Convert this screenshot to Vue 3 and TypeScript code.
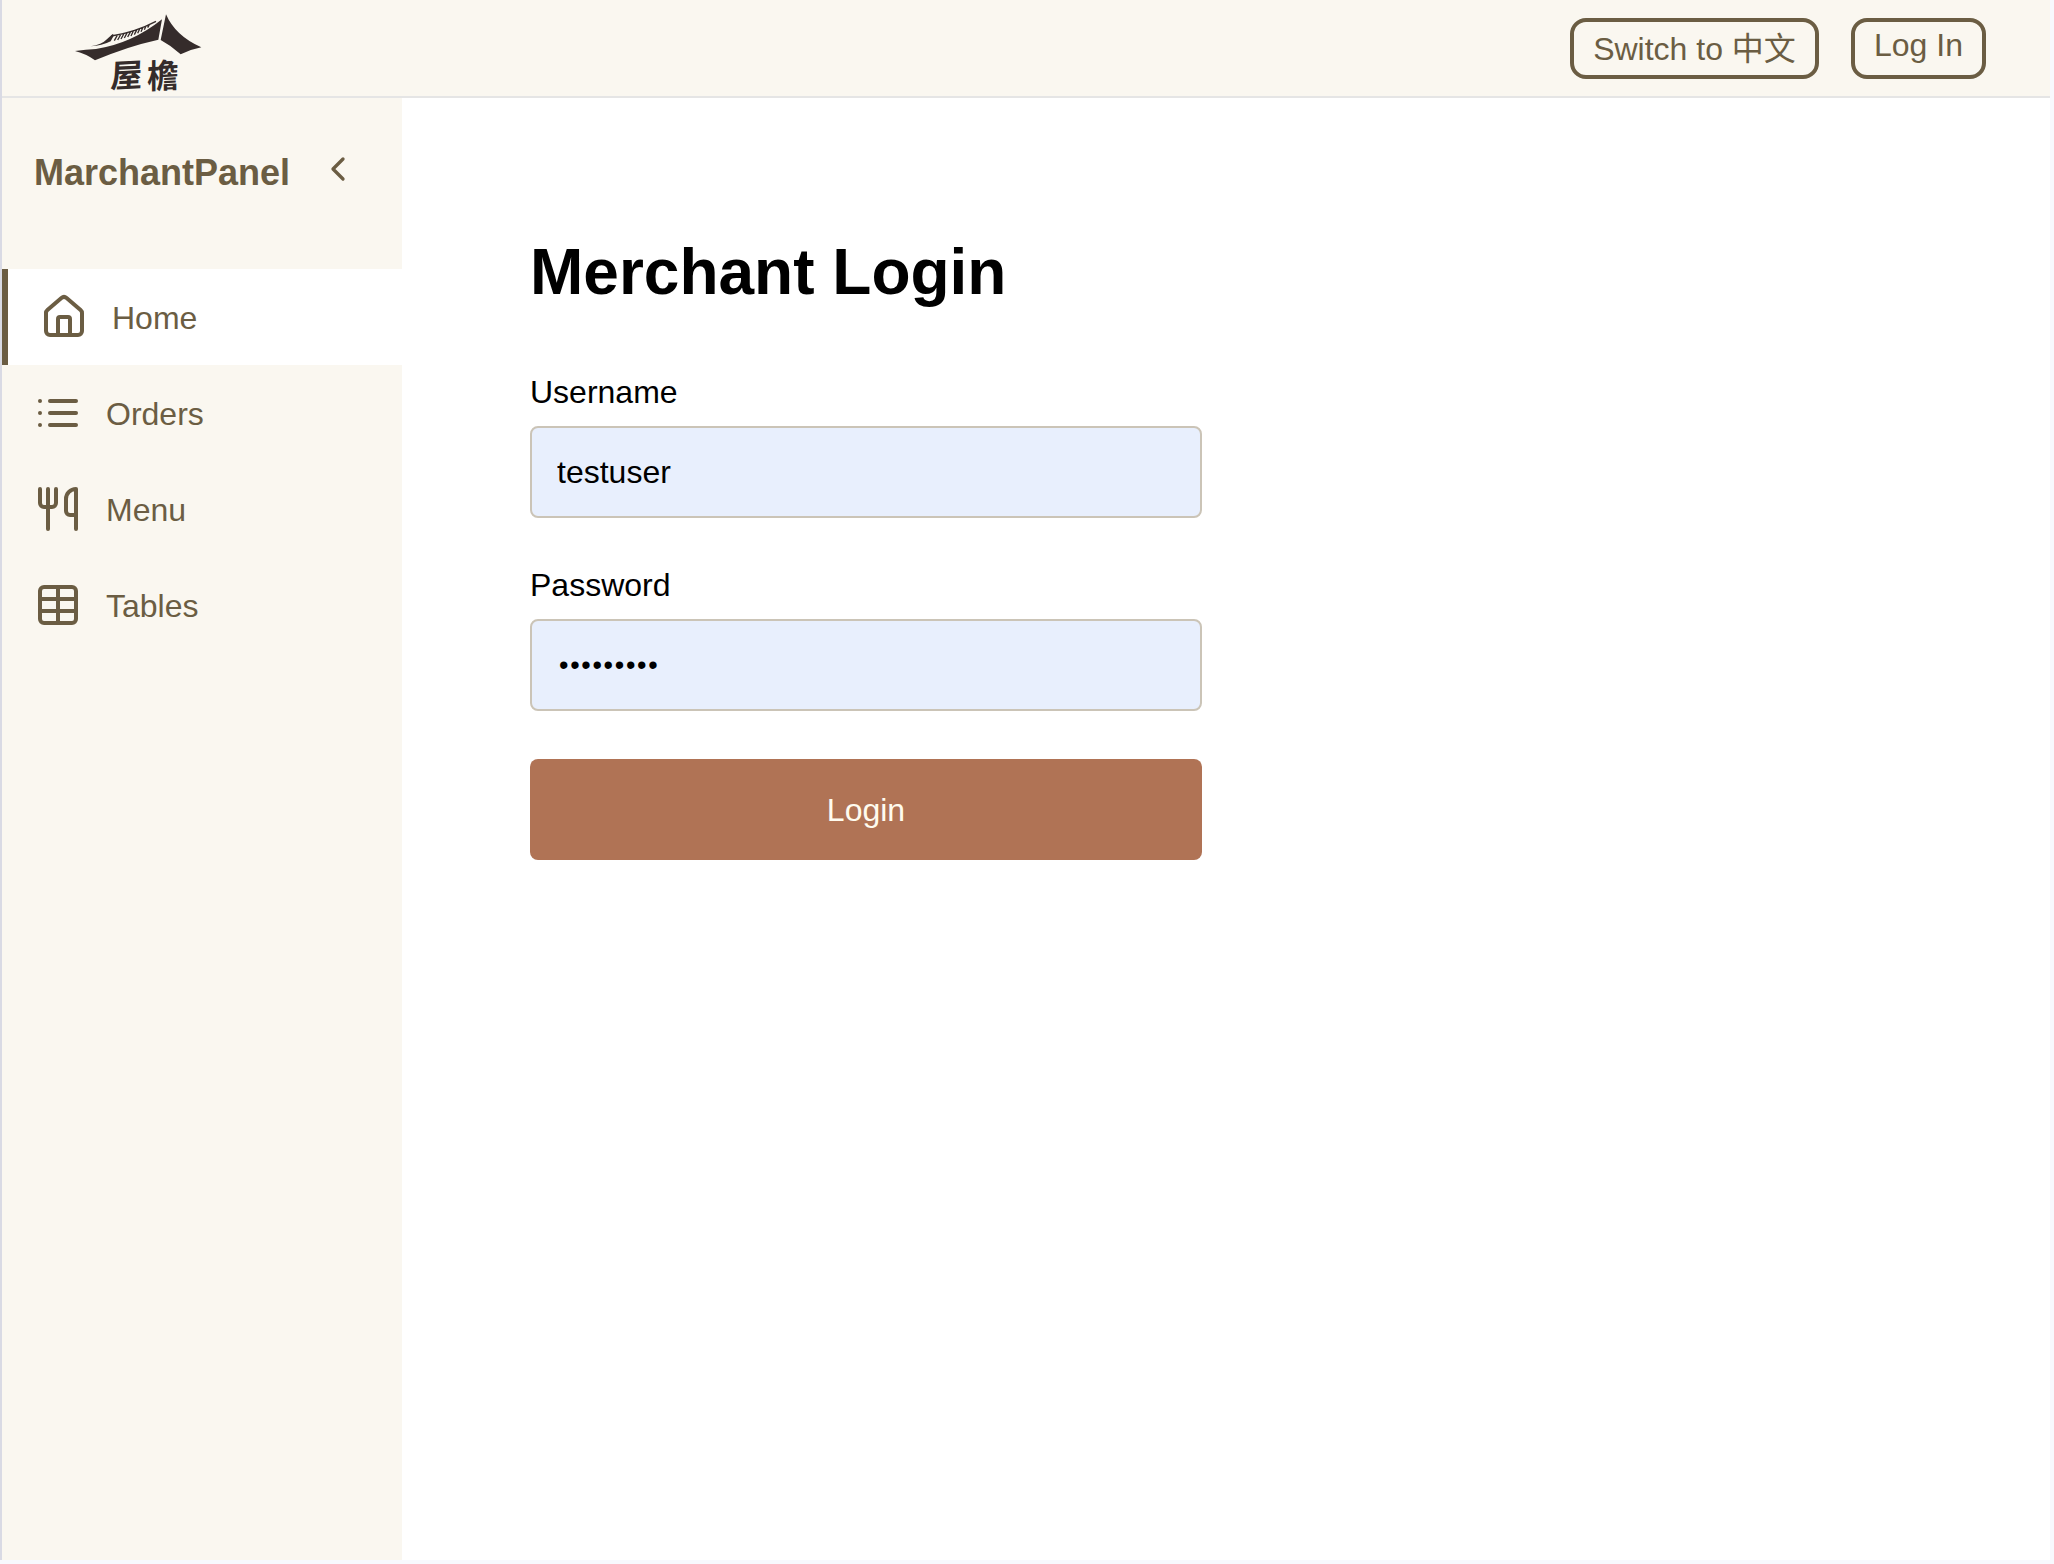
<script setup lang="ts">
import { ref } from 'vue'

interface NavItem {
  label: string
  paths: string[]
}

const items: NavItem[] = [
  {
    label: 'Home',
    paths: [
      'M15 21v-8a1 1 0 0 0-1-1h-4a1 1 0 0 0-1 1v8',
      'M3 10a2 2 0 0 1 .709-1.528l7-5.999a2 2 0 0 1 2.582 0l7 5.999A2 2 0 0 1 21 10v9a2 2 0 0 1-2 2H5a2 2 0 0 1-2-2z',
    ],
  },
  { label: 'Orders', paths: ['M8 6h13', 'M8 12h13', 'M8 18h13', 'M3 6h.01', 'M3 12h.01', 'M3 18h.01'] },
  {
    label: 'Menu',
    paths: [
      'M3 2v7c0 1.1.9 2 2 2h4a2 2 0 0 0 2-2V2',
      'M7 2v20',
      'M21 15V2a5 5 0 0 0-5 5v6c0 1.1.9 2 2 2h3Zm0 0v7',
    ],
  },
  {
    label: 'Tables',
    paths: [
      'M5 3h14a2 2 0 0 1 2 2v14a2 2 0 0 1-2 2H5a2 2 0 0 1-2-2V5a2 2 0 0 1 2-2z',
      'M12 3v18',
      'M3 9h18',
      'M3 15h18',
    ],
  },
]

const active = ref('Home')
const username = ref('testuser')
const password = ref('test12345')
</script>

<template>
  <div class="frame">
    <div class="app">
      <header class="header">
        <svg class="logo" viewBox="0 0 480 288" fill="#352c2b">
          <path d="M45 153Q78 149 108 147Q215 131 306 58L295 119Q200 140 105 181Q80 162 45 153Z" />
          <path d="M318 43Q346 108 424 142Q392 148 362 163Q334 137 302 120Z" />
          <path d="M92 139Q126 133 138 120L158 102L162 106L152 124Q125 138 92 139Z" />
          <path
            d="M163 122L173 104M173 120L183 102M183 117L193 99M193 114L202 97M203 111L212 94M213 108L221 91M223 104L231 88M233 100L240 85M243 95L249 82M253 89L258 78M263 83L268 74M154 108Q225 97 288 64"
            fill="none"
            stroke="#352c2b"
            stroke-width="4"
          />
          <g class="logo-text">
            <text transform="translate(150 263) rotate(-3) skewX(-6)">屋</text>
            <text transform="translate(261 266) rotate(-3) skewX(-3) scale(0.98 1.04)">檐</text>
          </g>
        </svg>
        <div class="actions">
          <button class="pill lang">Switch to 中文</button>
          <button class="pill login-link">Log In</button>
        </div>
      </header>
      <div class="body">
        <aside class="sidebar">
          <div class="brand">
            <span>MarchantPanel</span>
            <svg class="chevron" viewBox="0 0 24 24"><path d="m15 18-6-6 6-6" /></svg>
          </div>
          <nav>
            <a
              v-for="item in items"
              :key="item.label"
              class="item"
              :class="{ active: active === item.label }"
              @click="active = item.label"
            >
              <svg class="icon" viewBox="0 0 24 24"><path v-for="d in item.paths" :key="d" :d="d" /></svg>
              <span class="item-label">{{ item.label }}</span>
            </a>
          </nav>
        </aside>
        <main class="main">
          <form class="form" @submit.prevent>
            <h1>Merchant Login</h1>
            <label for="username">Username</label>
            <input id="username" v-model="username" type="text" />
            <label for="password">Password</label>
            <input id="password" v-model="password" type="password" />
            <button class="submit" type="submit">Login</button>
          </form>
        </main>
      </div>
    </div>
  </div>
</template>

<style>
html,
body {
  margin: 0;
  overflow: hidden;
}
</style>

<style scoped>
* {
  box-sizing: border-box;
}
.frame {
  width: 2054px;
  height: 1564px;
  padding: 0 4px 4px 0;
  background: #f8f9fe;
  font-family: "Liberation Sans", "Noto Sans CJK SC", sans-serif;
  font-size: 32px;
  color: #000;
}
.app {
  display: flex;
  flex-direction: column;
  height: 1560px;
  border-left: 2px solid #d9dae4;
  background: #fff;
}
.header {
  display: flex;
  justify-content: space-between;
  height: 98px;
  padding: 0 64px 0 58px;
  border-bottom: 2px solid #e5e5e5;
  background: #faf7f0;
}
.logo {
  width: 160px;
  height: 96px;
  overflow: visible;
}
.logo-text {
  font: 700 96px "Noto Sans CJK TC", "Noto Sans CJK SC", sans-serif;
}
.actions {
  display: flex;
  gap: 32px;
  padding-top: 18px;
}
.pill {
  height: 61px;
  padding: 0;
  border: 4px solid #6b5d43;
  border-radius: 16px;
  background: transparent;
  color: #6b5d43;
  font: inherit;
  line-height: 37px;
  white-space: nowrap;
}
.lang {
  width: 249px;
  padding-top: 2px;
}
.login-link {
  width: 135px;
  padding-bottom: 7px;
}
.body {
  display: flex;
  flex: 1;
}
.sidebar {
  width: 400px;
  background: #faf7f0;
  color: #6b5d43;
}
.brand {
  display: flex;
  justify-content: space-between;
  height: 171px;
  padding: 51px 44px 0 32px;
  font-size: 36px;
  font-weight: 700;
  line-height: 48px;
}
.chevron,
.icon {
  fill: none;
  stroke: currentColor;
  stroke-width: 2;
  stroke-linecap: round;
  stroke-linejoin: round;
}
.chevron {
  width: 40px;
  height: 40px;
}
.item {
  display: flex;
  align-items: center;
  gap: 24px;
  height: 96px;
  padding: 0 32px;
  cursor: pointer;
}
.item-label {
  padding-top: 2px;
}
.item.active {
  border-left: 6px solid #6b5d43;
  background: #fff;
}
.icon {
  width: 48px;
  height: 48px;
}
.main {
  flex: 1;
  padding: 128px;
}
.form {
  display: flex;
  flex-direction: column;
  width: 672px;
}
h1 {
  margin: 8px 0 62px;
  font-size: 64px;
  line-height: 76px;
}
label {
  margin-bottom: 13px;
  line-height: 41px;
}
input {
  height: 92px;
  margin: 0 0 47px;
  padding: 0 25px;
  border: 2px solid #cbc4b7;
  border-radius: 8px;
  outline: none;
  background: #e8effd;
  color: #000;
  font: inherit;
}
#password {
  padding-left: 27px;
  font-size: 27px;
  letter-spacing: 1.7px;
}
.submit {
  height: 101px;
  margin-top: 1px;
  padding: 1px 0 0;
  border: 0;
  border-radius: 8px;
  background: #b07355;
  color: #fffbef;
  font: inherit;
}
</style>
